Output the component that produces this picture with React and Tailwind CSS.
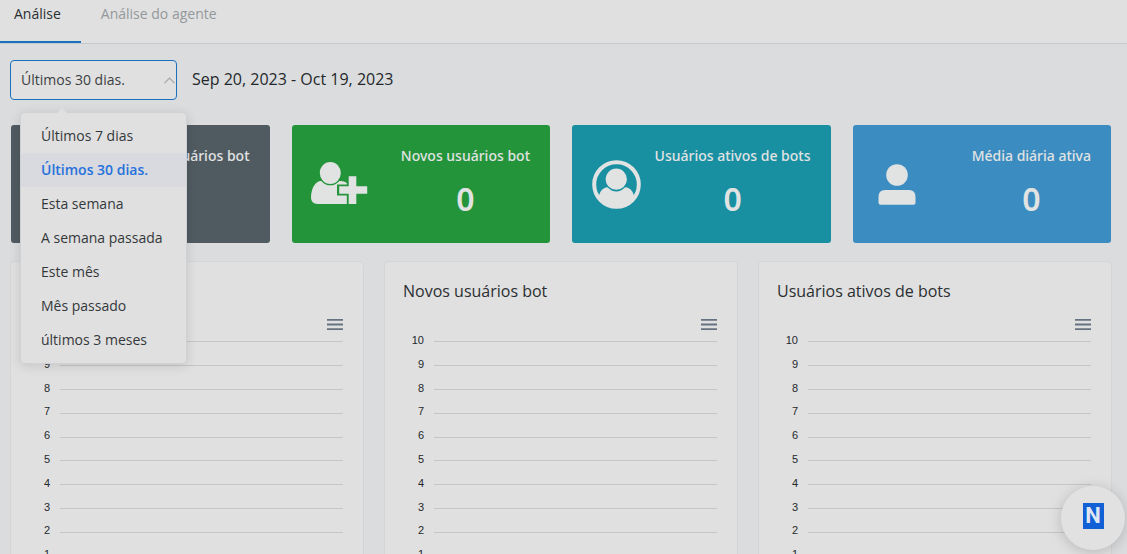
import { useState } from 'react'

const RANGES = [
  'Últimos 7 dias',
  'Últimos 30 dias.',
  'Esta semana',
  'A semana passada',
  'Este mês',
  'Mês passado',
  'últimos 3 meses',
]

const TICKS = [10, 9, 8, 7, 6, 5, 4, 3, 2, 1, 0]

function UserPlusIcon() {
  return (
    <svg width="57" height="43" viewBox="1 1 57 43" className="overflow-visible" fill="currentColor" aria-hidden="true">
      <path d="M9 19C3 20.500 0 28 0 35.500Q0 42 6.500 42H35.800V21Q33.500 19 29.500 19Z" />
      <ellipse cx="19.300" cy="11" rx="11.800" ry="12.300" className="fill-[#24943b]" />
      <ellipse cx="19.300" cy="11" rx="10.500" ry="11" />
      <path d="M26 22.500H36V33.500H26Z" className="fill-[#24943b]" />
      <path d="M37.700 14.300h7.600v10h10.900v7.400H45.300V42h-7.600V31.700h-9.500v-7.400h9.500Z" />
    </svg>
  )
}

function UserCircleIcon() {
  return (
    <svg width="49" height="49" viewBox="0 0 49 49" fill="currentColor" aria-hidden="true">
      <circle cx="24.500" cy="24.500" r="22.300" fill="none" stroke="currentColor" strokeWidth="4" />
      <path d="M6.500 37.500C8 31 10.500 28 15.500 27.300Q19.500 31.500 24.300 31.500T33.200 27.300C38.500 28 41 31 42.500 37.500C38 44 32 47 24.500 47S11 44 6.500 37.500Z" />
      <circle cx="24.300" cy="19.200" r="10.600" />
    </svg>
  )
}

function UserIcon() {
  return (
    <svg width="49" height="41" viewBox="0 0 49 41" fill="currentColor" aria-hidden="true">
      <circle cx="24" cy="11" r="10.800" />
      <path d="M12 26h24q6.500 0 6.500 7v5.500q0 2.200-2 2.200H7.500q-2 0-2-2.200V33q0-7 6.500-7Z" />
    </svg>
  )
}

const STATS = [
  { label: 'Número total de usuários bot', value: 0, color: 'bg-[#505b61]', Icon: UserIcon },
  { label: 'Novos usuários bot', value: 0, color: 'bg-[#24943b]', Icon: UserPlusIcon },
  { label: 'Usuários ativos de bots', value: 0, color: 'bg-[#1890a2]', Icon: UserCircleIcon },
  { label: 'Média diária ativa', value: 0, color: 'bg-[#3b8cc0]', Icon: UserIcon },
]

const CHARTS = ['Total usuários bot', 'Novos usuários bot', 'Usuários ativos de bots']

function StatCard({ label, value, color, Icon }) {
  return (
    <section className={`flex h-[118px] items-center justify-between rounded-[3px] px-5 text-[#e1e3e3] ${color}`}>
      <Icon />
      <div className="flex flex-col items-center gap-[13px] pb-[3px] font-['Noto_Sans','Open_Sans',sans-serif]">
        <h2 className="text-sm leading-5 font-medium whitespace-nowrap">{label}</h2>
        <p className="text-[32px] leading-10 font-semibold">{value}</p>
      </div>
    </section>
  )
}

function ChartCard({ title }) {
  return (
    <section className="rounded border border-[#d3d5d7] bg-[#e0e0e0] pt-[17px] pr-5 pb-6 pl-[18px]">
      <h2 className="text-base leading-6 text-[#2b2f32]">{title}</h2>
      <div className="flex justify-end pt-4">
        <button type="button" aria-label={`Menu: ${title}`} className="text-[#657280]">
          <svg width="16" height="11" viewBox="3 6 18 12" preserveAspectRatio="none" fill="currentColor">
            <path d="M3 18h18v-2H3v2zm0-5h18v-2H3v2zm0-7v2h18V6H3z" />
          </svg>
        </button>
      </div>
      <div className="grid h-[262px] auto-rows-fr">
        {TICKS.map((tick) => (
          <div key={tick} className="flex items-center gap-[10px]">
            <span className="w-[21px] pb-1 text-right font-['Liberation_Sans',Arial,sans-serif] text-[11px] leading-3 text-[#24292c]">
              {tick}
            </span>
            <span className="h-px flex-1 bg-[#c4c6c7]" />
          </div>
        ))}
      </div>
    </section>
  )
}

function RangePicker() {
  const [range, setRange] = useState(RANGES[1])
  const [open, setOpen] = useState(true)

  return (
    <div className="relative w-[167px]">
      <label htmlFor="range" className="sr-only">Período</label>
      <select
        id="range"
        value={range}
        onChange={(e) => setRange(e.target.value)}
        onMouseDown={(e) => {
          e.preventDefault()
          setOpen(!open)
        }}
        className="h-10 w-full appearance-none rounded border border-[#1a72bf] bg-[#e0e0e0] pr-7 pl-[10px] text-sm text-[#3c4043] outline-none"
      >
        {RANGES.map((r) => (
          <option key={r}>{r}</option>
        ))}
      </select>
      <svg className="pointer-events-none absolute top-[17px] right-[2px]" width="11" height="7" viewBox="0 0 11 7" fill="none" stroke="#a3a6aa" strokeWidth="1.200" aria-hidden="true">
        <path d="M0.500 6.200 5.500 1l5 5.200" />
      </svg>
      {open && (
        <div className="absolute top-[52px] left-[10px] z-10 w-[167px] rounded border border-[#cfd1d4] bg-[#e0e0e0] py-[6px] shadow-[0_2px_12px_rgba(0,0,0,0.12)]">
          <svg className="absolute -top-[6px] left-[35px]" width="12" height="7" viewBox="0 0 12 7" aria-hidden="true">
            <path d="M0 7 6 1l6 6Z" fill="#e0e0e0" />
          </svg>
          <ul>
            {RANGES.map((r) => (
              <li key={r}>
                <button
                  type="button"
                  aria-pressed={r === range}
                  onClick={() => {
                    setRange(r)
                    setOpen(false)
                  }}
                  className={`h-[34px] w-full pl-5 text-left text-sm whitespace-nowrap ${
                    r === range ? 'bg-[#d8dadf] font-semibold text-[#2671dc]' : 'text-[#34383b]'
                  }`}
                >
                  {r}
                </button>
              </li>
            ))}
          </ul>
        </div>
      )}
    </div>
  )
}

export default function App() {
  return (
    <div className="h-screen overflow-hidden bg-[#dadcde] font-['Open_Sans','Noto_Sans',sans-serif]">
      <nav className="flex h-11 border-b border-[#c5c9cb] bg-[#e0e0e0] text-sm leading-7">
        <a href="#analise" aria-current="page" className="h-[43px] border-b-2 border-[#1a72bf] pr-5 pl-[14px] text-[#2b2f32]">
          Análise
        </a>
        <a href="#agente" className="px-5 text-[#94989c]">Análise do agente</a>
      </nav>
      <main className="pt-4 pr-[15px] pl-[10px]">
        <div className="flex items-center gap-[15px]">
          <RangePicker />
          <p className="pb-[2px] text-base text-[#24282b]">Sep 20, 2023 - Oct 19, 2023</p>
        </div>
        <div className="grid grid-cols-4 gap-[22px] px-px pt-[25px]">
          {STATS.map((stat) => (
            <StatCard key={stat.label} {...stat} />
          ))}
        </div>
        <div className="grid grid-cols-3 gap-5 pt-[18px]">
          {CHARTS.map((title) => (
            <ChartCard key={title} title={title} />
          ))}
        </div>
      </main>
      <button
        type="button"
        aria-label="Abrir chat"
        className="fixed right-[2px] bottom-1 z-20 flex size-16 items-center justify-center rounded-full bg-[#e1e1e1] pb-[5px] shadow-[0_2px_14px_rgba(0,0,0,0.18)]"
      >
        <span className="flex h-[26px] w-[21px] items-center justify-center bg-[#1160d6] font-['Roboto',sans-serif] text-[22px] leading-none font-bold text-[#dfe6f2]">
          N
        </span>
      </button>
    </div>
  )
}
